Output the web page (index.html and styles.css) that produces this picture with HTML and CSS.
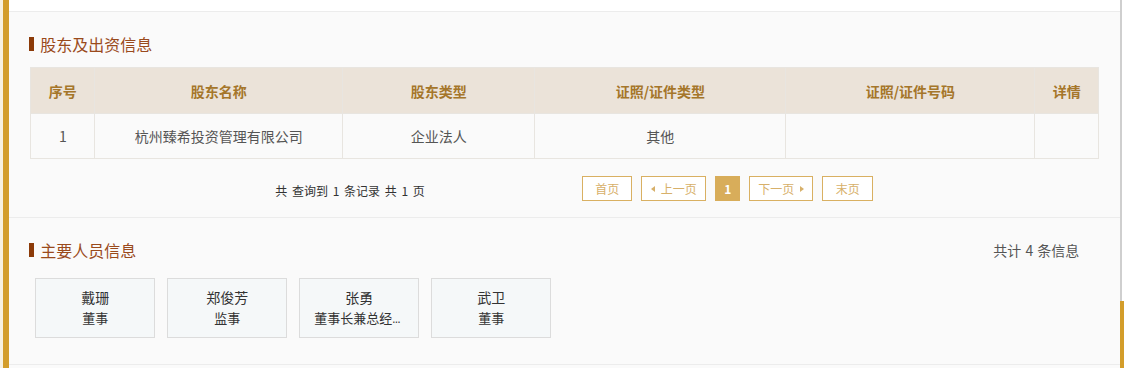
FILE: index.html
```html
<!DOCTYPE html>
<html lang="zh-CN">
<head>
<meta charset="utf-8">
<title>股东及出资信息</title>
<link rel="stylesheet" href="styles.css">
</head>
<body>
<div class="page">
  <div class="edge"><div class="gold"></div></div>
  <main class="content">
    <div class="topbar"></div>
    <section class="section sec-holders">
      <h2 class="title"><span class="mark"></span>股东及出资信息</h2>
      <table class="grid">
        <colgroup>
          <col class="c1"><col class="c2"><col class="c3"><col class="c4"><col class="c5"><col class="c6">
        </colgroup>
        <thead>
          <tr><th>序号</th><th>股东名称</th><th>股东类型</th><th>证照/证件类型</th><th>证照/证件号码</th><th>详情</th></tr>
        </thead>
        <tbody>
          <tr><td>1</td><td>杭州臻希投资管理有限公司</td><td>企业法人</td><td>其他</td><td></td><td></td></tr>
        </tbody>
      </table>
      <div class="pager">
        <div class="summary-box"><span class="summary">共 查询到 1 条记录 共 1 页</span></div>
        <div class="btns">
          <a class="btn w50">首页</a>
          <a class="btn w65"><i class="tri left"></i>上一页</a>
          <a class="btn cur">1</a>
          <a class="btn w64">下一页<i class="tri right"></i></a>
          <a class="btn w51">末页</a>
        </div>
      </div>
    </section>
    <section class="section sec-staff">
      <div class="head">
        <h2 class="title"><span class="mark"></span>主要人员信息</h2>
        <span class="count">共计 4 条信息</span>
      </div>
      <div class="cards">
        <div class="card"><div class="name">戴珊</div><div class="role">董事</div></div>
        <div class="card"><div class="name">郑俊芳</div><div class="role">监事</div></div>
        <div class="card"><div class="name">张勇</div><div class="role">董事长兼总经理</div></div>
        <div class="card"><div class="name">武卫</div><div class="role">董事</div></div>
      </div>
    </section>
  </main>
  <div class="rail"><div class="rail-line"></div><div class="rail-gold"></div></div>
</div>
</body>
</html>
```
FILE: styles.css
```css
* { box-sizing: border-box; margin: 0; padding: 0; }
html, body { width: 1124px; height: 368px; overflow: hidden; }
body {
  background: #fff;
  font-family: "Noto Sans CJK SC", "Noto Sans", sans-serif;
  color: #333;
}
.page { display: flex; height: 368px; }
.edge { width: 10px; background: #f8f1df; padding-left: 3px; }
.gold { height: 100%; background: #d39d2a; }
.content { flex: 1; background: #fafafa; display: flex; flex-direction: column; }
.topbar { height: 12px; background: #fff; border-bottom: 1px solid #ececec; flex: none; }
.rail { width: 4px; position: relative; background: #fff; }
.rail-line { position: absolute; left: 0; top: 0; bottom: 0; width: 2px; background: #cfcfcf; }
.rail-gold { position: absolute; left: 0; right: 0; top: 301px; bottom: 0; background: #d39d2a; }

.section { border-bottom: 1px solid #ececec; }
.title {
  display: flex; align-items: center;
  font-size: 16px; font-weight: normal; line-height: 20px;
  color: #9a4a1c;
}
.mark { width: 5px; height: 14px; background: #8b3a08; margin-right: 6px; }

.sec-holders { padding: 22px 21px 16px 20px; }
.sec-holders .title { margin-bottom: 13px; }
.grid { width: 1068px; margin-left: 1px; border-collapse: collapse; table-layout: fixed; font-size: 14px; }
.c1 { width: 64px; } .c2 { width: 248px; } .c3 { width: 192px; } .c4 { width: 251px; } .c5 { width: 249px; } .c6 { width: 64px; }
.grid th, .grid td { border: 1px solid #e8e5e0; text-align: center; height: 46px; }
.grid th { background: #ebe3d9; color: #a5762a; font-weight: bold; }
.grid td { background: #fafafa; color: #555; height: 45px; }

.pager { display: flex; align-items: center; margin-top: 17px; height: 25px; }
.summary-box { width: 553px; padding-left: 246px; }
.summary { font-size: 12px; color: #333; word-spacing: 2px; }
.btns { display: flex; gap: 9px; }
.btn {
  display: flex; align-items: center; justify-content: center; gap: 6px;
  height: 25px; border: 1px solid #d9b062; color: #d7b06a; background: #fff;
  font-size: 12px;
}
.w50 { width: 50px; } .w51 { width: 51px; } .w65 { width: 65px; } .w64 { width: 64px; }
.cur { width: 25px; background: #d8ad5a; color: #fff; font-weight: bold; border-color: #d8ad5a; }
.tri { width: 0; height: 0; border-top: 3px solid transparent; border-bottom: 3px solid transparent; }
.tri.left { border-right: 4px solid #d7b06a; }
.tri.right { border-left: 4px solid #d7b06a; }

.sec-staff { padding: 22px 41px 26px 20px; }
.head { display: flex; justify-content: space-between; align-items: center; margin-bottom: 18px; }
.count { font-size: 14px; color: #555; word-spacing: 1px; }
.cards { display: flex; gap: 12px; padding-left: 6px; }
.card {
  width: 120px; height: 60px; border: 1px solid #dcdcdc; background: #f5f8f9;
  text-align: center; padding: 8px 14px 0; color: #333;
}
.name { font-size: 14px; line-height: 20px; }
.role {
  font-family: "Liberation Mono", "Noto Sans CJK SC", monospace;
  font-size: 13px; line-height: 20px; margin-top: 3px;
  white-space: nowrap; overflow: hidden; text-overflow: ellipsis;
}
```
